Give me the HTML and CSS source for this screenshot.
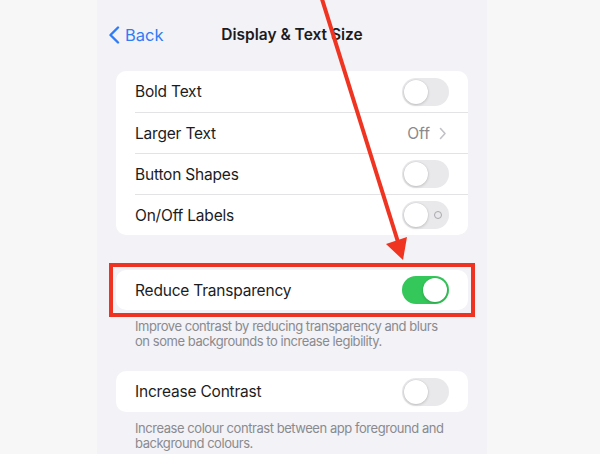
FILE: index.html
```html
<!DOCTYPE html>
<html lang="en">
<head>
    <meta charset="UTF-8">
    <meta name="viewport" content="width=device-width, initial-scale=1.0">
    <title>Display &amp; Text Size</title>
    <link rel="stylesheet" href="styles.css">
</head>
<body>
    <div class="screen">
        <nav class="nav-bar">
            <a class="back" href="#">
                <svg class="back-chevron" width="12" height="18" viewBox="0 0 12 18">
                    <path d="M10 1.5 L2.5 9 L10 16.5" fill="none" stroke="currentColor" stroke-width="2.4" stroke-linecap="round" stroke-linejoin="round"/>
                </svg>
                Back
            </a>
            <div class="nav-title">Display &amp; Text Size</div>
        </nav>

        <div class="group">
            <div class="row">
                <span class="label">Bold Text</span>
                <span class="switch"><span class="knob"></span></span>
            </div>
            <div class="row">
                <span class="label">Larger Text</span>
                <span class="detail">Off
                    <svg class="chevron" width="8" height="13" viewBox="0 0 8 13">
                        <path d="M1.5 1.5 L6 6.5 L1.5 11.5" fill="none" stroke="currentColor" stroke-width="1.6" stroke-linecap="round" stroke-linejoin="round"/>
                    </svg>
                </span>
            </div>
            <div class="row">
                <span class="label">Button Shapes</span>
                <span class="switch"><span class="knob"></span></span>
            </div>
            <div class="row">
                <span class="label">On/Off Labels</span>
                <span class="switch labels"><span class="knob"></span><span class="off-mark"></span></span>
            </div>
        </div>

        <div class="callout">
            <div class="group">
                <div class="row">
                    <span class="label">Reduce Transparency</span>
                    <span class="switch on"><span class="knob"></span></span>
                </div>
            </div>
        </div>
        <p class="footnote">Improve contrast by reducing transparency and blurs on some backgrounds to increase legibility.</p>

        <div class="group">
            <div class="row">
                <span class="label">Increase Contrast</span>
                <span class="switch"><span class="knob"></span></span>
            </div>
        </div>
        <p class="footnote">Increase colour contrast between app foreground and background colours.</p>
    </div>

    <!-- pointer drawn on top of the settings screen -->
    <svg class="pointer" width="600" height="454" viewBox="0 0 600 454">
        <line x1="321" y1="-4" x2="398" y2="242" stroke="#ef3421" stroke-width="4"/>
        <polygon points="386,244 407,237 403,260" fill="#ef3421"/>
    </svg>
</body>
</html>
```

FILE: styles.css
```css
* {
    margin: 0;
    padding: 0;
    box-sizing: border-box;
}

body {
    background: #f7f7f8;
    font-family: Inter, 'Noto Sans', sans-serif;
    color: #1c1c1e;
    height: 454px;
    overflow: hidden;
    position: relative;
}

.screen {
    width: 390px;
    height: 454px;
    margin-left: 97px;
    background: #f2f2f7;
    padding: 0 19px;
}

.nav-bar {
    position: relative;
    height: 71px;
    display: flex;
    align-items: center;
    padding-bottom: 2px;
}

.back {
    display: flex;
    align-items: center;
    gap: 5px;
    margin-left: -8px;
    color: #2f7cf6;
    text-decoration: none;
    font-size: 16.5px;
}

.nav-title {
    position: absolute;
    left: 0;
    right: 0;
    top: 25px;
    text-align: center;
    font-size: 15.5px;
    font-weight: 600;
    pointer-events: none;
}

.group {
    background: #fff;
    border-radius: 10px;
}

.row {
    height: 41px;
    display: flex;
    align-items: center;
    justify-content: space-between;
    margin-left: 19px;
    padding-right: 19px;
}

.row + .row {
    border-top: 1px solid #e3e3e6;
}

.label {
    font-size: 15.5px;
    letter-spacing: -0.2px;
}

.detail {
    display: flex;
    align-items: center;
    gap: 9px;
    color: #8a8a8e;
    font-size: 15.5px;
    margin-right: 2px;
}

.chevron {
    color: #c2c2c6;
}

.switch {
    position: relative;
    width: 47px;
    height: 28px;
    border-radius: 14px;
    background: #e9e9ec;
}

.knob {
    position: absolute;
    top: 2px;
    left: 2px;
    width: 24px;
    height: 24px;
    border-radius: 50%;
    background: #fff;
    box-shadow: 0 1px 3px rgba(0, 0, 0, 0.18), 0 0 0 0.5px rgba(0, 0, 0, 0.05);
}

.switch.on {
    background: #34c759;
}

.switch.on .knob {
    left: 21px;
}

.off-mark {
    position: absolute;
    right: 7px;
    top: 10px;
    width: 8px;
    height: 8px;
    border-radius: 50%;
    border: 1px solid #a8a8ad;
}

/* red frame around the highlighted setting */
.callout {
    margin: 28px -7px -7px;
    border: 4px solid #ee3322;
    padding: 3px;
}

.callout .row {
    height: 40px;
}

.footnote {
    font-size: 13px;
    letter-spacing: -0.45px;
    line-height: 14.5px;
    color: #8a8a8e;
    padding: 9px 20px 0 19px;
    margin-bottom: 23px;
}

.pointer {
    position: absolute;
    left: 0;
    top: 0;
    pointer-events: none;
}
```
